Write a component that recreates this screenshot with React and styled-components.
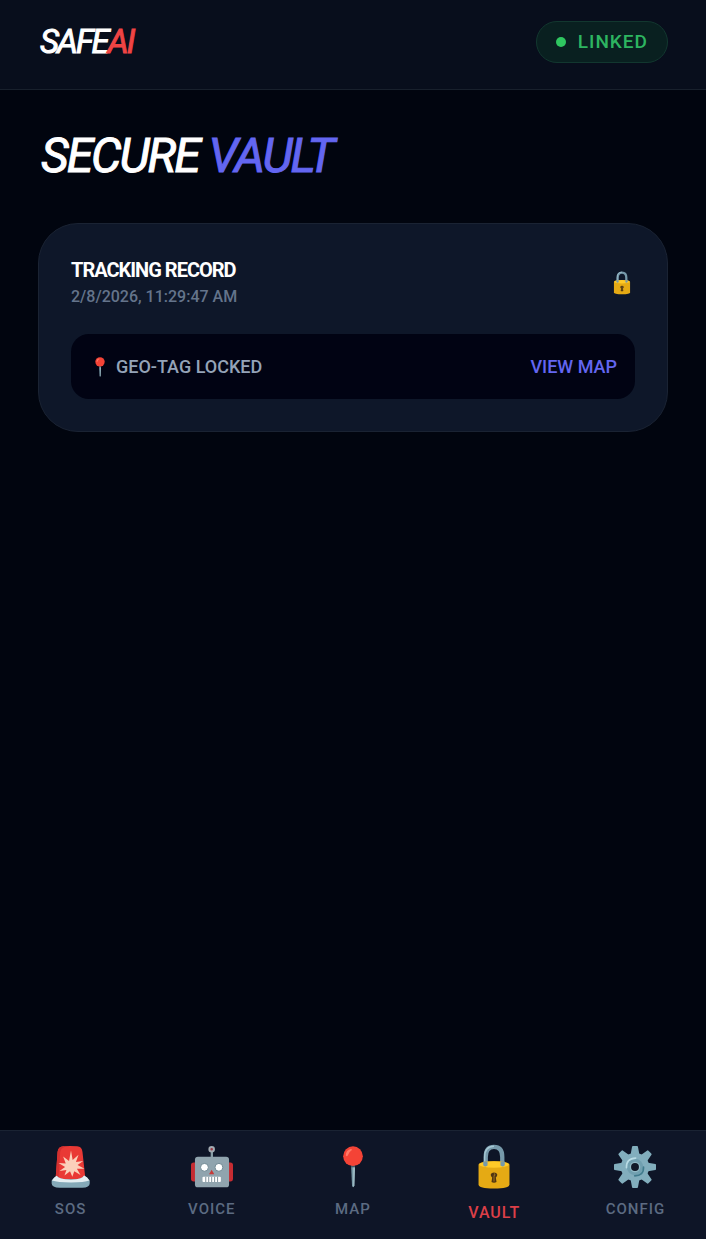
import React, { useState } from "react";
import styled, { createGlobalStyle } from "styled-components";

const GlobalStyle = createGlobalStyle`
  * {
    box-sizing: border-box;
  }
  body {
    margin: 0;
    background: #01050f;
    color: #ffffff;
    font-family: Roboto, "Noto Sans", sans-serif;
  }
  button {
    font-family: inherit;
    border: none;
    background: none;
    padding: 0;
    cursor: pointer;
  }
`;

const SirenIcon = () => (
  <svg viewBox="0 0 128 128" aria-hidden="true">
    <path
      d="M17 101 23 18Q25 2 41 1Q62-1 83 1Q97 2 99 18L108 101Z"
      fill="#e93935"
    />
    <path d="M17 101 23 18Q25 2 41 1L44 3Q32 8 31 20L26 98Z" fill="#d3302f" />
    <path
      d="M64 14 69 43 87 27 79 49 101 46 84 58 105 69 82 69 93 88 74 77 68 94 61 77 44 90 50 73 29 76 46 64 26 52 48 53 40 32 58 46Z"
      fill="#fbd0ba"
    />
    <path
      d="M5 105Q12 96 21 91Q25 102 64 102Q99 102 103 90Q114 94 121 105V114Q121 126 98 127H30Q5 126 5 114Z"
      fill="#84a9b8"
    />
    <path
      d="M6 105Q12 96 20 91Q25 102 64 102Q99 102 104 90Q114 94 120 105Q105 111 64 111T6 105Z"
      fill="#e4eef2"
    />
  </svg>
);

const RobotIcon = () => (
  <svg viewBox="0 0 128 128" aria-hidden="true">
    <rect y="50" width="20" height="58" rx="8" fill="#c62c32" />
    <rect x="108" y="50" width="20" height="58" rx="8" fill="#c62c32" />
    <rect x="60" y="16" width="7" height="22" fill="#879da6" />
    <circle cx="63" cy="10" r="7" fill="#9a3944" stroke="#a3abb2" strokeWidth="6" />
    <rect x="12" y="33" width="104" height="93" rx="9" fill="#90a4ae" />
    <circle cx="41" cy="65" r="12" fill="#fff" stroke="#6f8791" strokeWidth="3" />
    <circle cx="85" cy="65" r="12" fill="#fff" stroke="#6f8791" strokeWidth="3" />
    <path d="m63 72 8 14H55Z" fill="#c73a38" />
    <rect x="35" y="94" width="56" height="16" rx="3" fill="#fff" />
    <path
      d="M45 94v16M54 94v16M63 94v16M72 94v16M81 94v16"
      stroke="#7d9099"
      strokeWidth="3"
    />
  </svg>
);

const PinIcon = () => (
  <svg viewBox="0 0 128 128" aria-hidden="true">
    <path d="M58 54H70L68 121Q64 130 61 121Z" fill="#7899a6" />
    <path d="M65 54H70L68 121L65 126Z" fill="#a8c5ce" />
    <path d="M58 56H70V65H58Z" fill="#3d5968" />
    <circle cx="64" cy="31" r="30" fill="#f44336" />
    <path
      d="M42 29Q42 13 57 9Q63 9 60 13Q51 18 48 29Q45 34 42 29Z"
      fill="#ff7a68"
    />
  </svg>
);

const LockIcon = () => (
  <svg viewBox="0 0 128 128" aria-hidden="true">
    <path
      d="M41 58V36Q41 8 64 8T87 36V58"
      fill="none"
      stroke="#7699aa"
      strokeWidth="12"
    />
    <path
      d="M38 50V36Q38 6 64 6"
      fill="none"
      stroke="#a5c7d3"
      strokeWidth="4"
    />
    <path
      d="M21 58Q22 48 64 48T107 58V113Q107 124 64 124T21 113Z"
      fill="#e5aa14"
    />
    <ellipse cx="64" cy="57" rx="41" ry="9" fill="#ffca28" />
    <path d="M34 59V49H46V60Q40 65 34 59ZM82 60V49H94V59Q88 65 82 60Z" fill="#7699aa" />
    <path
      d="M59 93Q54 89 55 84Q57 79 64 79T73 84Q74 89 69 93L71 106Q64 110 57 106Z"
      fill="#503612"
    />
    <path d="M64 82Q69 86 64 89V104" fill="none" stroke="#98701d" strokeWidth="3" />
  </svg>
);

const TEETH = [0, 45, 90, 135, 180, 225, 270, 315];

const GearIcon = () => (
  <svg viewBox="0 0 128 128" aria-hidden="true">
    <g fill="#82aebd">
      {TEETH.map((angle) => (
        <path
          key={angle}
          d="M50 29 55 2Q55 0 58 0H70Q73 0 73 2L78 29Z"
          transform={`rotate(${angle} 64 64)`}
        />
      ))}
      <circle cx="64" cy="64" r="43" />
    </g>
    <circle cx="64" cy="64" r="25" fill="#71a0b0" />
    <path
      d="M38 66Q37 38 66 37"
      fill="none"
      stroke="#b9dce5"
      strokeWidth="5"
      strokeLinecap="round"
    />
    <path
      d="M90 64Q91 91 63 91"
      fill="none"
      stroke="#417b8d"
      strokeWidth="5"
      strokeLinecap="round"
    />
    <circle cx="64" cy="64" r="16" fill="#91bac6" />
    <circle cx="64" cy="64" r="12" fill="#111a29" />
  </svg>
);

const tabs = [
  { id: "sos", label: "SOS", Icon: SirenIcon },
  { id: "voice", label: "VOICE", Icon: RobotIcon },
  { id: "map", label: "MAP", Icon: PinIcon },
  { id: "vault", label: "VAULT", Icon: LockIcon },
  { id: "config", label: "CONFIG", Icon: GearIcon },
];

const records = [{ title: "TRACKING RECORD", time: "2/8/2026, 11:29:47 AM" }];

function RecordCard({ record }) {
  return (
    <Card>
      <CardHead>
        <div>
          <RecordTitle>{record.title}</RecordTitle>
          <RecordTime>{record.time}</RecordTime>
        </div>
        <LockSlot>
          <LockIcon />
        </LockSlot>
      </CardHead>
      <GeoRow>
        <GeoTag>
          <PinSlot>
            <PinIcon />
          </PinSlot>
          GEO-TAG LOCKED
        </GeoTag>
        <MapLink href="#map">VIEW MAP</MapLink>
      </GeoRow>
    </Card>
  );
}

function App() {
  const [active, setActive] = useState("vault");

  return (
    <Page>
      <GlobalStyle />
      <Header>
        <Brand>
          SAFE<BrandAccent>AI</BrandAccent>
        </Brand>
        <Status>
          <StatusDot />
          LINKED
        </Status>
      </Header>
      <Main>
        <Heading>
          SECURE <HeadingAccent>VAULT</HeadingAccent>
        </Heading>
        {records.map((record) => (
          <RecordCard key={record.time} record={record} />
        ))}
      </Main>
      <TabBar>
        {tabs.map(({ id, label, Icon }) => (
          <Tab key={id} $active={id === active} onClick={() => setActive(id)}>
            <Icon />
            {label}
          </Tab>
        ))}
      </TabBar>
    </Page>
  );
}

export default App;

const Page = styled.div`
  display: flex;
  flex-direction: column;
  min-height: 100vh;
`;

const Header = styled.header`
  display: flex;
  justify-content: space-between;
  align-items: flex-start;
  padding: 21px 38px 26px 40px;
  background: #080e1c;
  border-bottom: 1px solid #18202c;
`;

const Brand = styled.div`
  font-size: 33px;
  line-height: 42px;
  font-weight: 400;
  font-style: italic;
  letter-spacing: -2px;
  -webkit-text-stroke: 1px currentColor;
`;

const BrandAccent = styled.span`
  color: #ef4444;
`;

const Status = styled.div`
  display: flex;
  align-items: center;
  gap: 12px;
  height: 42px;
  padding: 0 19px;
  border: 1px solid #12372f;
  border-radius: 21px;
  background: #092020;
  color: #2db560;
  font-size: 19px;
  line-height: 20px;
  font-weight: 500;
  letter-spacing: 1px;
`;

const StatusDot = styled.span`
  width: 10px;
  height: 10px;
  border-radius: 50%;
  background: #2fc660;
`;

const Main = styled.main`
  flex: 1;
  padding: 36px 38px;
`;

const Heading = styled.h1`
  margin: 0 0 37px;
  padding-left: 3px;
  font-size: 48px;
  line-height: 60px;
  font-weight: 400;
  font-style: italic;
  letter-spacing: -2px;
  -webkit-text-stroke: 1px currentColor;
`;

const HeadingAccent = styled.span`
  color: #6366f1;
`;

const Card = styled.article`
  padding: 32px;
  border: 1px solid #1a2333;
  border-radius: 40px;
  background: #0e1729;
`;

const CardHead = styled.div`
  display: flex;
  justify-content: space-between;
  align-items: center;
  margin-bottom: 24px;
`;

const RecordTitle = styled.h2`
  margin: 0;
  font-size: 20px;
  line-height: 28px;
  font-weight: 700;
  letter-spacing: -1px;
`;

const RecordTime = styled.div`
  color: #64748b;
  font-size: 16px;
  line-height: 26px;
  font-weight: 500;
`;

const LockSlot = styled.span`
  display: flex;
  width: 26px;
  justify-content: center;

  svg {
    width: 24px;
    height: 24px;
  }
`;

const GeoRow = styled.div`
  display: flex;
  justify-content: space-between;
  align-items: center;
  height: 65px;
  padding: 0 18px;
  border-radius: 18px;
  background: #010313;
  font-size: 18px;
  font-weight: 500;
`;

const GeoTag = styled.span`
  display: flex;
  align-items: center;
  gap: 5px;
  color: #94a3b8;
`;

const PinSlot = styled.span`
  display: flex;

  svg {
    width: 22px;
    height: 20px;
  }
`;

const MapLink = styled.a`
  color: #6366f1;
  text-decoration: none;
`;

const TabBar = styled.nav`
  position: sticky;
  bottom: 0;
  display: flex;
  height: 109px;
  background: #0e1527;
  border-top: 1px solid #1a2333;
`;

const Tab = styled.button`
  flex: 1;
  display: flex;
  flex-direction: column;
  align-items: center;
  gap: ${(props) => (props.$active ? "12px" : "10px")};
  padding-top: ${(props) => (props.$active ? "13px" : "15px")};
  color: ${(props) => (props.$active ? "#dc3f48" : "#5c6b82")};
  font-size: ${(props) => (props.$active ? "16px" : "15px")};
  line-height: 22px;
  font-weight: 500;
  letter-spacing: 1px;

  svg {
    width: ${(props) => (props.$active ? "46px" : "42px")};
    height: ${(props) => (props.$active ? "46px" : "42px")};
  }
`;
